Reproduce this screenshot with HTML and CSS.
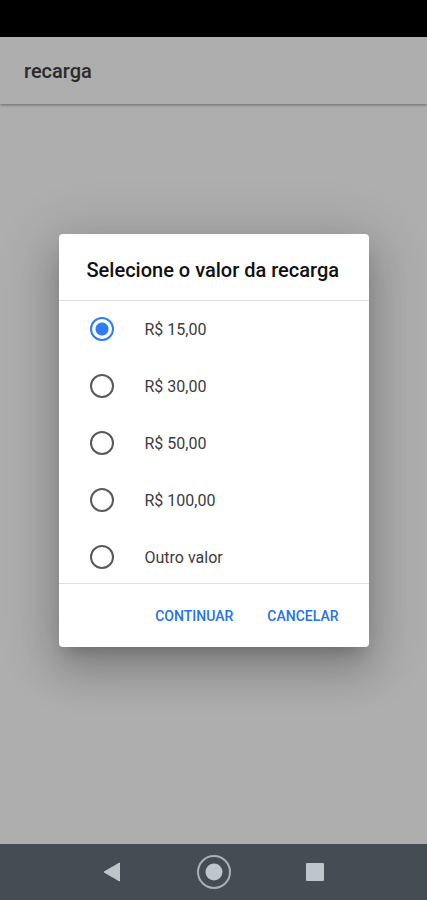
FILE: index.html
```
<!DOCTYPE html>
<html lang="pt-BR">
<head>
  <meta charset="UTF-8" />
  <meta name="viewport" content="width=device-width, initial-scale=1" />
  <title>recarga</title>
  <link rel="stylesheet" href="styles.css">
</head>
<body>
  <div class="status-bar"></div>

  <div class="app">
    <header class="toolbar">
      <h1>recarga</h1>
    </header>

    <div class="backdrop">
      <form class="alert" role="dialog" aria-labelledby="titulo">
        <h2 id="titulo">Selecione o valor da recarga</h2>

        <div class="opcoes">
          <label class="opcao"><input type="radio" name="valor" value="15" checked /> R$ 15,00</label>
          <label class="opcao"><input type="radio" name="valor" value="30" /> R$ 30,00</label>
          <label class="opcao"><input type="radio" name="valor" value="50" /> R$ 50,00</label>
          <label class="opcao"><input type="radio" name="valor" value="100" /> R$ 100,00</label>
          <label class="opcao"><input type="radio" name="valor" value="outro" /> Outro valor</label>
        </div>

        <div class="botoes">
          <button type="button">CONTINUAR</button>
          <button type="button">CANCELAR</button>
        </div>
      </form>
    </div>
  </div>

  <nav class="nav-bar">
    <button type="button" aria-label="Voltar">
      <svg width="36" height="36" viewBox="0 0 36 36">
        <path d="M9 18 L24.5 9 V27 Z" fill="#bfc6ca" stroke="#bfc6ca" stroke-linejoin="round" />
      </svg>
    </button>
    <button type="button" aria-label="Início">
      <svg width="36" height="36" viewBox="0 0 36 36">
        <circle cx="18" cy="18" r="16" fill="none" stroke="#a9b1b4" stroke-width="2" />
        <circle cx="18" cy="18" r="8.5" fill="#bfc6ca" />
      </svg>
    </button>
    <button type="button" aria-label="Recentes">
      <svg width="36" height="36" viewBox="0 0 36 36">
        <rect x="9" y="9" width="18" height="18" rx="1" fill="#bfc6ca" />
      </svg>
    </button>
  </nav>
</body>
</html>
```

FILE: styles.css
```
* {
  box-sizing: border-box;
}

body {
  margin: 0;
  min-height: 100vh;
  display: flex;
  flex-direction: column;
  font-family: Roboto, "Liberation Sans", sans-serif;
  background: #aeaeae;
}

.status-bar {
  height: 37px;
  background: #000;
}

.app {
  position: relative;
  flex: 1;
  display: flex;
  flex-direction: column;
}

.toolbar {
  height: 67px;
  padding: 0 24px;
  display: flex;
  align-items: center;
  box-shadow: 0 1px 3px rgba(0, 0, 0, 0.4);
}

h1 {
  margin: 0;
  font-size: 20px;
  font-weight: 500;
  line-height: 24px;
  color: #2b2b2b;
}

/* Alerta sobre a página */
.backdrop {
  position: absolute;
  inset: 0;
  display: flex;
  align-items: center;
  justify-content: center;
}

.alert {
  width: 310px;
  max-width: 90%;
  background: #fff;
  border-radius: 4px;
  box-shadow: 0 11px 15px -7px rgba(0, 0, 0, 0.2),
    0 24px 38px 3px rgba(0, 0, 0, 0.14),
    0 9px 56px 10px rgba(0, 0, 0, 0.14);
}

h2 {
  margin: 0;
  padding: 24px 28px 18px;
  font-size: 20px;
  font-weight: 500;
  line-height: 24px;
  white-space: nowrap;
  color: #111;
}

.opcoes {
  height: 284px;
  display: grid;
  grid-auto-rows: 56px;
  row-gap: 1px;
  overflow: hidden;
  border-top: 1px solid #dedede;
  border-bottom: 1px solid #dedede;
}

.opcao {
  padding-left: 31px;
  display: flex;
  align-items: center;
  gap: 31px;
  font-size: 16px;
  color: #3c3c3c;
  cursor: pointer;
}

.opcao input {
  appearance: none;
  width: 24px;
  height: 24px;
  margin: 0;
  border: 2px solid #595959;
  border-radius: 50%;
}

.opcao input:checked {
  border-color: #2f7df6;
  background: radial-gradient(circle, #2f7df6 6px, transparent 7px);
}

.botoes {
  height: 63px;
  padding: 0 20px;
  display: flex;
  align-items: center;
  justify-content: flex-end;
  gap: 14px;
}

.botoes button {
  padding: 10px;
  border: 0;
  background: none;
  font-family: inherit;
  font-size: 14px;
  font-weight: 500;
  line-height: 20px;
  color: #2672e8;
  cursor: pointer;
}

.nav-bar {
  height: 56px;
  display: flex;
  align-items: center;
  justify-content: center;
  gap: 65px;
  background: #454d54;
}

.nav-bar button {
  padding: 0;
  border: 0;
  background: none;
  line-height: 0;
  cursor: pointer;
}
```
